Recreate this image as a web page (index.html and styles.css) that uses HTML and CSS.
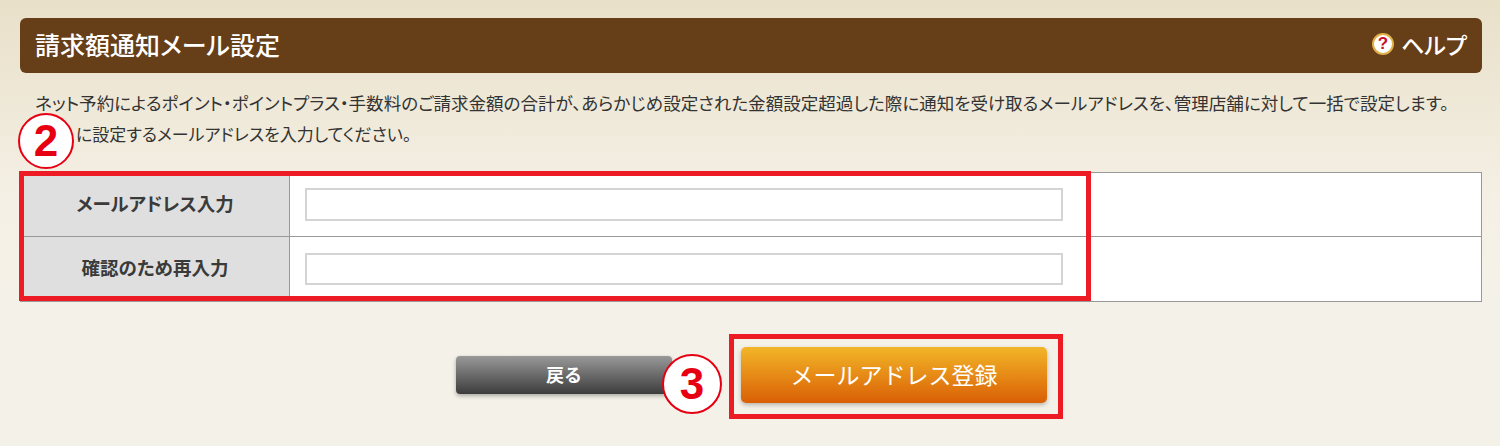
FILE: index.html
```html
<!DOCTYPE html>
<html lang="ja">
<head>
<meta charset="UTF-8">
<title>請求額通知メール設定</title>
<link rel="stylesheet" href="styles.css">
</head>
<body>
	<div class="page">
		<div class="titleBar">
			<h2>請求額通知メール設定</h2>
			<a class="help"><span class="helpIcon">?</span>ヘルプ</a>
		</div>
		<div class="intro">
			<p>ネット予約によるポイント・ポイントプラス・手数料のご請求金額の合計が、あらかじめ設定された金額設定超過した際に通知を受け取るメールアドレスを、管理店舗に対して一括で設定します。</p>
			<p class="second">に設定するメールアドレスを入力してください。</p>
			<span class="step step2">2</span>
		</div>
		<div class="formWrap">
			<table class="form">
				<tr>
					<th>メールアドレス入力</th>
					<td><input type="text"></td>
				</tr>
				<tr>
					<th>確認のため再入力</th>
					<td><input type="text"></td>
				</tr>
			</table>
			<div class="mark markForm"></div>
		</div>
		<div class="buttons">
			<button class="back">戻る</button>
			<span class="step step3">3</span>
			<div class="submitMark">
				<button class="submit">メールアドレス登録</button>
			</div>
		</div>
	</div>
</body>
</html>
```

FILE: styles.css
```css
html, body {
	margin: 0;
	height: 100%;
}

body {
	font-family: "Liberation Sans", "Noto Sans CJK JP", sans-serif;
	font-feature-settings: "palt";
	color: #333;
	background: #f4f1e8;
}

.page {
	height: 446px;
	box-sizing: border-box;
	padding: 18px 18px 0 20px;
	background: linear-gradient(to bottom, #e9e0c9 0, #f4f0e5 200px, #f4f1e8 300px);
	overflow: hidden;
}

.titleBar {
	display: flex;
	align-items: center;
	justify-content: space-between;
	height: 55px;
	box-sizing: border-box;
	padding: 0 15px 4px;
	border-radius: 6px;
	background-color: #663e18;
	color: #fff;
}

.titleBar h2 {
	margin: 0;
	font-size: 25px;
	font-weight: 500;
}

.help {
	display: flex;
	align-items: center;
	gap: 7px;
	font-size: 23px;
	font-weight: 500;
}

.helpIcon {
	width: 18px;
	height: 18px;
	border-radius: 50%;
	border: 2px solid #e0b04a;
	background-color: #fff;
	color: #c8102e;
	font-size: 17px;
	font-weight: bold;
	line-height: 18px;
	text-align: center;
}

.intro {
	position: relative;
	height: 99px;
	padding: 15px 15px 0;
	box-sizing: border-box;
	font-size: 17.55px;
	line-height: 32px;
}

.intro p {
	margin: 0;
	white-space: nowrap;
}

.intro .second {
	padding-left: 41px;
	font-size: 17px;
}

.step {
	position: absolute;
	width: 56px;
	height: 56px;
	box-sizing: border-box;
	border: 2px solid #e60012;
	border-radius: 50%;
	background-color: #fff;
	color: #e60012;
	font-size: 44px;
	font-weight: bold;
	line-height: 52px;
	text-align: center;
}

.step2 {
	left: -2px;
	top: 40px;
}

.formWrap {
	position: relative;
}

table.form {
	width: 100%;
	border-collapse: collapse;
	background-color: #fff;
}

table.form th, table.form td {
	height: 63px;
	padding: 0;
	border: 1px solid #999;
}

table.form tr + tr th, table.form tr + tr td {
	height: 64px;
}

table.form th {
	width: 269px;
	padding-bottom: 4px;
	box-sizing: border-box;
	background-color: #dfdfdf;
	font-size: 18.5px;
	color: #3a3a3a;
}

table.form td {
	padding-left: 15px;
}

table.form input {
	display: block;
	width: 758px;
	height: 33px;
	box-sizing: border-box;
	border: 2px solid #d4d4d4;
	background-color: #fff;
}

table.form tr + tr input {
	height: 32px;
}

.mark {
	position: absolute;
	box-sizing: border-box;
	border: 5px solid #ed1c24;
}

.markForm {
	left: -1px;
	top: -1px;
	width: 1072px;
	height: 130px;
}

.buttons {
	position: relative;
	display: flex;
	align-items: center;
	margin-top: 32px;
	padding-left: 436px;
}

.back {
	width: 216px;
	height: 38px;
	margin-bottom: 3px;
	padding-bottom: 4px;
	border: 0;
	border-radius: 4px;
	background: linear-gradient(to bottom, #999, #3c3c3c);
	box-shadow: 0 2px 4px rgba(0, 0, 0, .3);
	color: #fff;
	font-family: inherit;
	font-size: 18px;
	font-weight: bold;
}

.step3 {
	left: 642px;
	top: 20px;
	width: 60px;
	height: 60px;
	line-height: 56px;
}

.submitMark {
	margin-left: 57px;
	padding: 8px 11px 11px 7px;
	border: 5px solid #ed1c24;
}

.submit {
	display: block;
	width: 306px;
	height: 56px;
	padding-bottom: 3px;
	border: 0;
	border-radius: 5px;
	background: linear-gradient(to bottom, #f2b628, #da5f05);
	box-shadow: 0 2px 4px rgba(0, 0, 0, .25);
	color: #fff;
	font-family: inherit;
	font-size: 23px;
}
```
